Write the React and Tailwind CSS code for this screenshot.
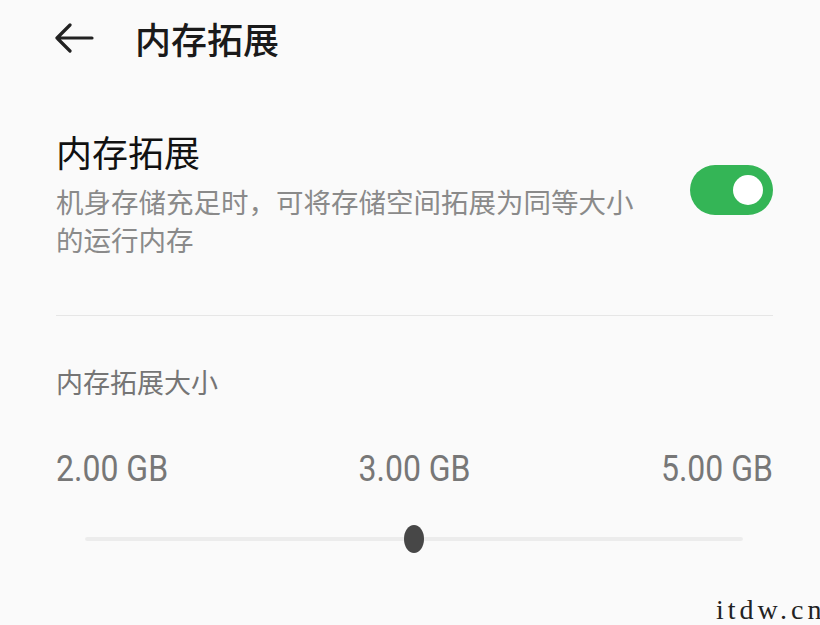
import React, { useState } from "react";

const cjk = { fontFamily: '"Noto Sans CJK SC", "Noto Sans", sans-serif' };
const num = { fontFamily: 'Roboto, "Noto Sans CJK SC", sans-serif' };

const BackArrow = () => (
  <svg width="40" height="30" viewBox="0 0 40 30" fill="none">
    <path
      d="M38 15H3M16 2L3 15l13 13"
      stroke="#222"
      strokeWidth="3.2"
      strokeLinecap="round"
      strokeLinejoin="round"
    />
  </svg>
);

const Toggle = ({ on, onChange }) => (
  <button
    onClick={() => onChange(!on)}
    className={`w-[83px] h-[50px] rounded-full flex items-center px-[10px] shrink-0 ${
      on ? "bg-[#34b556] justify-end" : "bg-[#cfcfcf] justify-start"
    }`}
  >
    <span className="w-[30px] h-[30px] rounded-full bg-white block" />
  </button>
);

const App = () => {
  const [enabled, setEnabled] = useState(true);

  return (
    <div className="relative w-[820px] h-[625px] overflow-hidden bg-[#fafafa]" style={cjk}>
      {/* Header */}
      <div className="h-[75px] flex items-center pl-[54px]">
        <BackArrow />
        <div className="ml-[41px] text-[36px] leading-none font-medium text-[#1a1a1a]">内存拓展</div>
      </div>

      <div className="pl-[56px] pr-[47px]">
        {/* Toggle row */}
        <div className="mt-[53px] flex items-center justify-between">
          <div className="w-[600px]">
            <div className="text-[36px] leading-[46px] text-[#111]">内存拓展</div>
            <div className="mt-[8px] text-[27.5px] leading-[38px] text-[#8a8a8a]">
              机身存储充足时，可将存储空间拓展为同等大小的运行内存
            </div>
          </div>
          <div className="mb-[6px]">
            <Toggle on={enabled} onChange={setEnabled} />
          </div>
        </div>

        <div className="mt-[57px] h-px bg-[#e6e6e6]" />

        {/* Size selector */}
        <div className="mt-[48px] text-[27px] leading-[36px] text-[#757575]">内存拓展大小</div>

        <div className="mt-[48px] flex justify-between h-[40px] items-center text-[#777]" style={num}>
          {["2.00 GB", "3.00 GB", "5.00 GB"].map((v) => (
            <span key={v} className="text-[32px] leading-[40px] scale-y-[1.15] inline-block">
              {v}
            </span>
          ))}
        </div>

        <div className="mt-[37px] ml-[29px] mr-[30px] h-[28px] relative flex items-center">
          <div className="w-full h-[4px] rounded-full bg-[#ececec]" />
          <div className="absolute left-1/2 top-0 -translate-x-1/2 w-[20px] h-[28px] rounded-[50%] bg-[#474747]" />
        </div>
      </div>

      <div
        className="absolute left-[716px] top-[596px] text-[28px] leading-none tracking-[4px] text-[#222] whitespace-nowrap"
        style={{ fontFamily: '"Liberation Serif", "DejaVu Serif", serif' }}
      >
        itdw.cn
      </div>
    </div>
  );
};

export default App;
